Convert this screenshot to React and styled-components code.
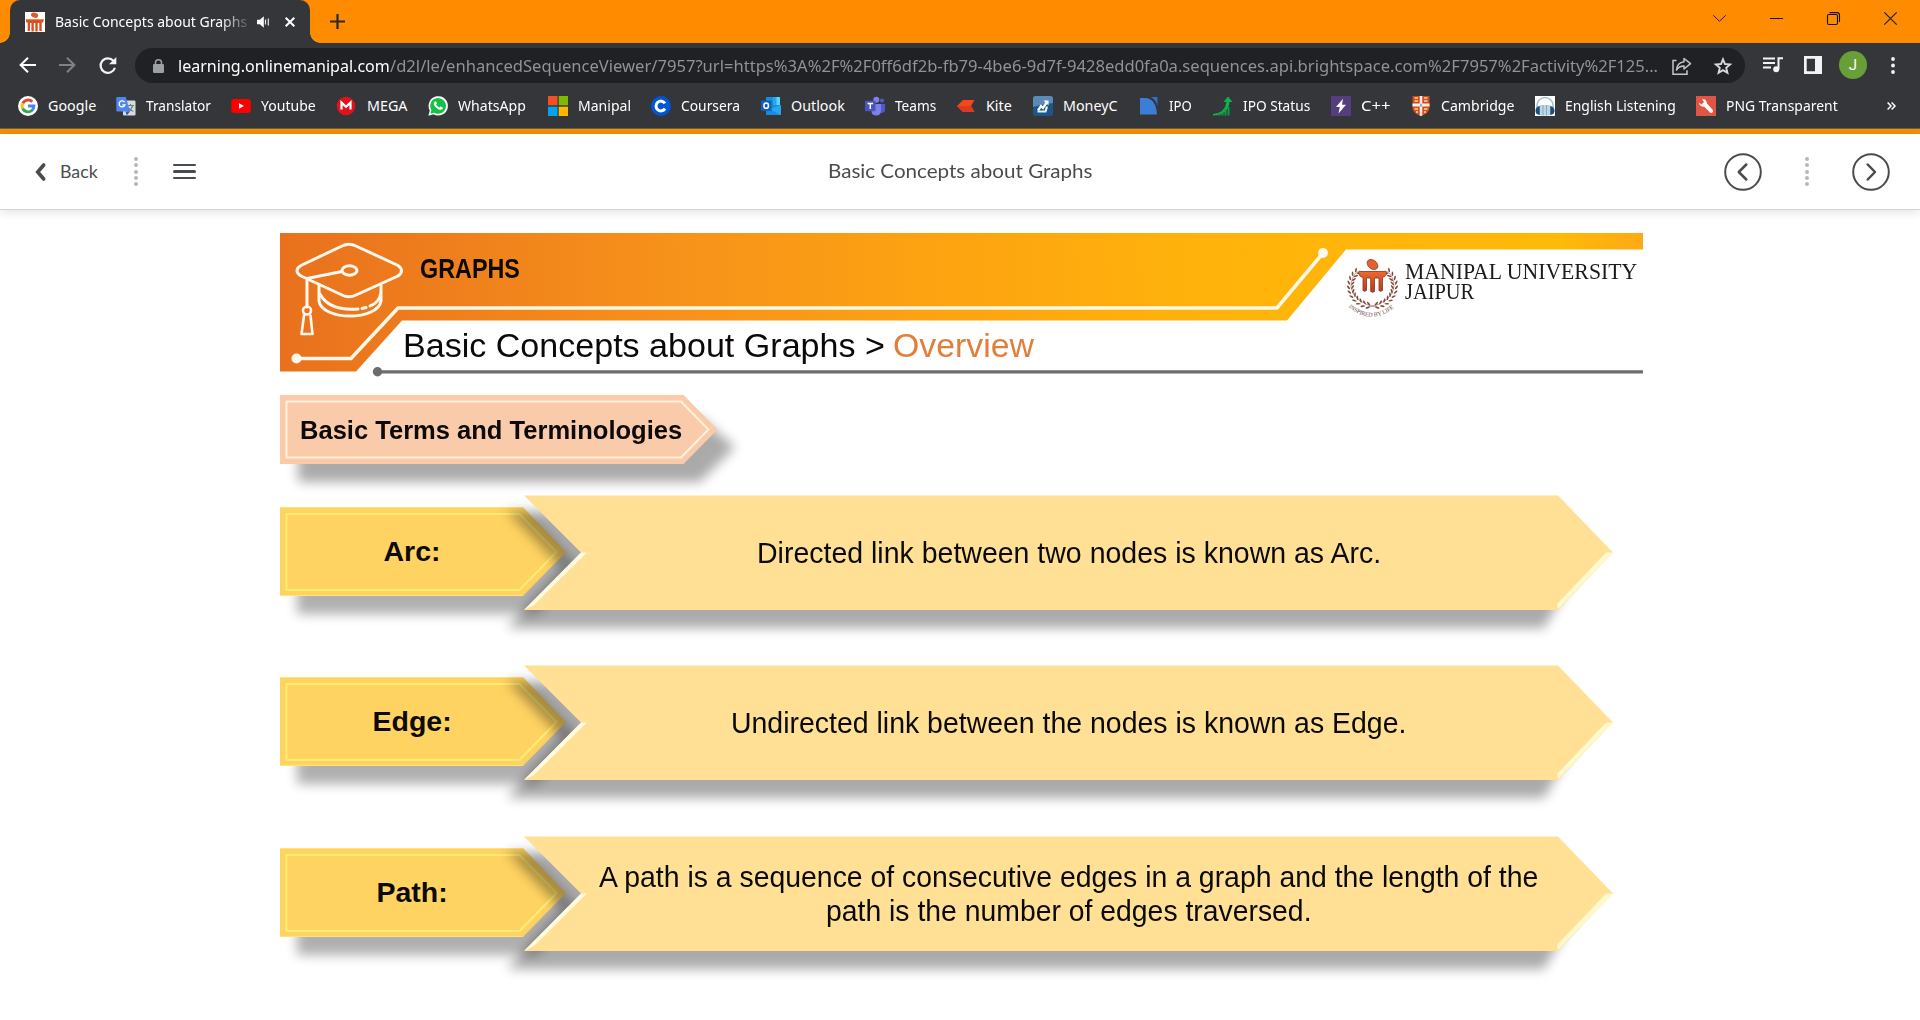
import React, { useLayoutEffect, useRef, useState } from "react";
import styled, { createGlobalStyle } from "styled-components";

const Global = createGlobalStyle`
  * { box-sizing: border-box; }
  html, body { margin: 0; padding: 0; background: #fff; overflow: hidden; }
  svg { display: block; flex: none; overflow: visible; }
`;

const ui = `"Segoe UI", "Noto Sans", "Open Sans", sans-serif`;
const arial = `"Liberation Sans", Arial, sans-serif`;

/* ---------- text fitted to a given width ---------- */

const FitBox = styled.span`
  display: block;
  flex: none;
  width: ${(p) => p.$w}px;
  white-space: nowrap;
`;
const FitInner = styled.span`
  display: inline-block;
  transform-origin: 0 50%;
  white-space: pre;
`;

function Fit({ width, children }) {
  const ref = useRef(null);
  const [scale, setScale] = useState(1);
  useLayoutEffect(() => {
    if (ref.current) setScale(width / ref.current.offsetWidth);
  }, [width]);
  return (
    <FitBox $w={width}>
      <FitInner ref={ref} style={{ transform: `scaleX(${scale})` }}>
        {children}
      </FitInner>
    </FitBox>
  );
}

/* ---------- page and browser chrome ---------- */

const Page = styled.div`
  width: 1920px;
  height: 1020px;
  overflow: hidden;
  display: flex;
  flex-direction: column;
  background: #fff;
  font-family: ${ui};
`;
const TabStrip = styled.div`
  height: 43px;
  flex: none;
  background: #ff8c00;
  display: flex;
`;
const Tab = styled.div`
  position: relative;
  margin-left: 10px;
  width: 300px;
  height: 43px;
  padding: 0 15px;
  display: flex;
  align-items: center;
  background: #35363a;
  border-radius: 10px 10px 0 0;
  &::before,
  &::after {
    content: "";
    position: absolute;
    bottom: 0;
    width: 10px;
    height: 10px;
  }
  &::before {
    left: -10px;
    background: radial-gradient(circle at 0 0, transparent 9.5px, #35363a 10px);
  }
  &::after {
    right: -10px;
    background: radial-gradient(circle at 100% 0, transparent 9.5px, #35363a 10px);
  }
`;
const TabTitle = styled.div`
  margin-left: 10px;
  width: 202px;
  font-size: 14.3px;
  line-height: 41px;
  color: #fff;
  overflow: hidden;
  mask-image: linear-gradient(90deg, #000 165px, transparent 198px);
`;
const TabClose = styled.div`
  margin-left: 15px;
`;
const NewTab = styled.div`
  width: 55px;
  display: flex;
  align-items: center;
  justify-content: center;
`;
const WindowControls = styled.div`
  margin-left: auto;
  display: flex;
  width: 229px;
  height: 37px;
`;
const WindowButton = styled.div`
  width: 57px;
  display: flex;
  align-items: center;
  justify-content: center;
`;

const Toolbar = styled.div`
  height: 45px;
  flex: none;
  background: #35363a;
  display: flex;
  padding-top: 5px;
`;
const NavButtons = styled.div`
  width: 135px;
  height: 34px;
  padding-left: 15px;
  display: flex;
  align-items: center;
  gap: 15px;
`;
const NavButton = styled.div`
  width: 25px;
  display: flex;
  justify-content: center;
`;
const Omnibox = styled.div`
  width: 1610px;
  height: 35px;
  border-radius: 18px;
  background: #202124;
  display: flex;
  align-items: center;
  padding: 0 2px 0 17px;
`;
const Url = styled.div`
  flex: 1;
  margin-left: 14px;
  display: flex;
  font-size: 16.6px;
  line-height: 33px;
  color: #8f9296;
`;
const Domain = styled.span`
  color: #fff;
`;
const OmniIcon = styled.div`
  width: ${(p) => p.$w}px;
  display: flex;
  justify-content: center;
`;
const Actions = styled.div`
  display: flex;
  margin-left: 8px;
  height: 34px;
`;
const Action = styled.div`
  width: 40px;
  display: flex;
  align-items: center;
  justify-content: center;
`;
const Avatar = styled.div`
  width: 28px;
  height: 28px;
  border-radius: 50%;
  background: #689f38;
  color: #fff;
  font: 15px/28px Roboto, sans-serif;
  text-align: center;
`;

const Bookmarks = styled.div`
  height: 41px;
  flex: none;
  padding-left: 18px;
  padding-bottom: 4px;
  background: #35363a;
  border-bottom: 1px solid #5f6063;
  display: flex;
  align-items: center;
`;
const Bookmark = styled.div`
  width: ${(p) => p.$w}px;
  display: flex;
  align-items: center;
  gap: 10px;
  font-size: 14.3px;
  line-height: 36px;
  color: #fff;
`;
const Accent = styled.div`
  height: 5px;
  flex: none;
  background: #f59100;
`;

/* ---------- viewer header ---------- */

const ViewerHeader = styled.header`
  height: 76px;
  flex: none;
  display: grid;
  grid-template-columns: 1fr auto 1fr;
  align-items: center;
  border-bottom: 1px solid #d4d4d4;
  box-shadow: 0 2px 10px rgba(0, 0, 0, 0.12);
  background: #fff;
  color: #494c4e;
  font: 19.2px/72px Lato, sans-serif;
`;
const ViewerTitle = styled.div`
  padding-bottom: 2px;
`;
const HeaderLeft = styled.div`
  display: flex;
  align-items: center;
  padding-left: 34px;
`;
const BackLabel = styled.div`
  margin-left: 13px;
  margin-right: 1px;
  padding-bottom: 2px;
  font-size: 17.8px;
`;
const HeaderRight = styled.div`
  display: flex;
  align-items: center;
  justify-content: flex-end;
  padding-right: 30px;
`;
const DotDivider = styled.div`
  display: flex;
  flex-direction: column;
  gap: 2.2px;
  margin: 0 ${(p) => p.$mx}px;
`;
const Dot = styled.i`
  width: 4px;
  height: 4px;
  border-radius: 50%;
  background: #b1b9be;
`;
const Burger = styled.div`
  width: 23px;
  display: flex;
  flex-direction: column;
  gap: 4px;
`;
const BurgerLine = styled.i`
  height: 2.4px;
  border-radius: 2px;
  background: #494c4e;
`;

/* ---------- slide ---------- */

const Slide = styled.main`
  width: 1363px;
  margin: 23px 0 0 280px;
  display: flex;
  flex-direction: column;
  font-family: ${arial};
  color: #0c0a08;
`;
const Backdrop = styled.svg`
  position: absolute;
  left: 0;
  top: 0;
`;
const Banner = styled.section`
  position: relative;
  height: 162px;
  display: flex;
  justify-content: space-between;
`;
const BannerText = styled.div`
  position: relative;
  padding: 20px 0 0 123px;
`;
const Subject = styled.div`
  padding-left: 17px;
  font-size: 28.5px;
  line-height: 30px;
  font-weight: 700;
`;
const Topic = styled.h1`
  margin: 43px 0 0;
  display: flex;
  gap: 8px;
  font-weight: 400;
  font-size: 33px;
  line-height: 40px;
`;
const Current = styled.span`
  color: #e07f3c;
`;
const Brand = styled.div`
  position: relative;
  display: flex;
  padding: 26px 6px 0 0;
  gap: 7px;
`;
const BrandName = styled.div`
  padding-top: 3px;
  font-family: "Liberation Serif", serif;
  font-size: 22.5px;
  line-height: 20px;
  color: #1c1a1a;
`;
const Ribbon = styled.h2`
  position: relative;
  margin: 0;
  height: 69px;
  padding-left: 20px;
  display: flex;
  font-size: 25px;
  line-height: 71px;
  font-weight: 700;
`;
const RibbonText = styled.span`
  position: relative;
`;
const Term = styled.section`
  position: relative;
  height: 115px;
  margin-top: ${(p) => p.$gap}px;
  display: flex;
  gap: 36px;
`;
const TermLabel = styled.div`
  position: relative;
  width: 264px;
  display: flex;
  justify-content: center;
  font-size: 28.5px;
  line-height: 113px;
  font-weight: 700;
`;
const TermBody = styled.div`
  position: relative;
  width: 977px;
  display: flex;
  flex-direction: column;
  align-items: center;
  justify-content: center;
  font-size: 29px;
  line-height: 34px;
  padding-top: ${(p) => (p.$double ? 1 : 0)}px;
`;
const Shadow = styled.polygon`
  fill: #000;
  opacity: ${(p) => p.$o};
  filter: blur(6px);
`;

/* ---------- logos ---------- */

const Pillars = ({ size = 20 }) => (
  <svg width={size} height={size} viewBox="0 0 20 20">
    <rect width="20" height="20" fill="#fff" />
    <ellipse cx="9.6" cy="3.2" rx="3.7" ry="2.5" fill="#e2572a" transform="rotate(18 9.6 3.2)" />
    <path d="M.8 7h18l-.6 3.4h-1.5V19h-2.4v-8h-1.6v8.4h-2.4V11H8.800v8.400H6.400V11H5v8H2.700v-8.600H1.300z" fill="#d94f20" />
    <path d="M1 7h18l-.2 1H1.200z" fill="#f08a4b" />
  </svg>
);

const leaves = Array.from({ length: 11 }, (_, i) => 78 - i * 12.5);

const Crest = () => (
  <svg width="50" height="58" viewBox="0 0 50 58">
    <defs>
      <path id="motto" d="M.5 48 Q24 68 49 46.500" />
      <linearGradient id="pillar" x1="0" y1="0" x2="0" y2="1">
        <stop offset="0" stopColor="#f06a2c" />
        <stop offset="1" stopColor="#b83a1c" />
      </linearGradient>
    </defs>
    {[1, -1].map((side) => (
      <g key={side} transform={`translate(24.500 27) scale(${side} 1)`}>
        <path d="M-5 21.500 Q19 17 21.500 1 Q22 -8 15 -15" fill="none" stroke="#8a5a4c" strokeWidth=".6" />
        {leaves.map((a) => {
          const r = (a * Math.PI) / 180;
          const x = Math.cos(r) * 22;
          const y = Math.sin(r) * 20;
          return (
            <g key={a} transform={`translate(${x} ${y}) rotate(${a - 90})`} fill="#80493c">
              <ellipse cx="1" cy="-1.800" rx="2.300" ry=".85" transform="rotate(-35)" />
              <ellipse cx="1" cy="1.800" rx="2.300" ry=".85" transform="rotate(35)" />
            </g>
          );
        })}
      </g>
    ))}
    <ellipse cx="24.500" cy="5.500" rx="6" ry="4.300" transform="rotate(38 24.500 5.500)" fill="#e5602b" stroke="#8c3a20" strokeWidth=".7" />
    <path
      d="M10.500 13 Q11 11.500 13 12.500 H36 Q38 11.500 38.700 13 Q38.800 17.500 34.500 18.300 V31.500 Q32.500 33 31 31.500 V19 H26.500 V32.500 Q24.500 34 22.700 32.500 V19 H18.500 V31.500 Q16.500 33 15 31.500 V18.300 Q10.500 17.500 10.500 13z"
      fill="url(#pillar)"
      stroke="#7d3420"
      strokeWidth=".8"
    />
    <text fontFamily="Liberation Serif, serif" fontSize="5.900" fill="#6b4a42">
      <textPath href="#motto">INSPIRED BY LIFE</textPath>
    </text>
  </svg>
);

const icon = (children, box = "0 0 20 20") => (
  <svg width="20" height="20" viewBox={box}>{children}</svg>
);

const bookmarks = [
  ["Google", 98, 48, icon(<>
    <circle cx="10" cy="10" r="10" fill="#fff" />
    <g fill="none" strokeWidth="2.900">
      <path d="M4.800 7.300A5.900 5.900 0 0 1 14.300 5.800" stroke="#ea4335" />
      <path d="M4.700 12.600A5.900 5.900 0 0 1 4.700 7.400" stroke="#fbbc05" />
      <path d="M14 14.300A5.900 5.900 0 0 1 4.700 12.500" stroke="#34a853" />
      <path d="M10 10h5.900A5.900 5.900 0 0 1 13.800 14.500" stroke="#4285f4" />
    </g>
  </>)],
  ["Translator", 115, 65, icon(<>
    <rect x="7" y="4.500" width="12.500" height="15" rx="1.200" fill="#d8dade" />
    <path d="M11 9.500h7M14.500 8v1.500M16.800 9.500q-1.200 4-4.800 6M12.300 11.500q1.500 2.800 5 4" stroke="#6b7a8c" strokeWidth="1.100" fill="none" />
    <path d="M1.500 1h8.300l4.200 14.500H1.500Q.3 15.500.3 14.300V2.200Q.3 1 1.500 1z" fill="#4e86ec" />
    <path d="M9.500 15.500H14l-3.300 4z" fill="#2f5bb5" />
    <path d="M8.600 6.200A3 3 0 1 0 9 8.800H6.300" fill="none" stroke="#fff" strokeWidth="1.300" />
  </>)],
  ["Youtube", 106, 55, icon(<>
    <rect x=".3" y="3" width="19.500" height="14" rx="3.300" fill="#f00" />
    <path d="M8 7.200v5.600l5-2.800z" fill="#fff" />
  </>)],
  ["MEGA", 91, 40, icon(<>
    <circle cx="9" cy="10" r="9.300" fill="#e0121c" />
    <path d="M4.500 13.600V6.600L9 10.800l4.500-4.200v7" fill="none" stroke="#fff" strokeWidth="2.200" />
  </>)],
  ["WhatsApp", 120, 68, icon(<>
    <path d="M.4 19.700l1.400-5.100A9.700 9.700 0 1 1 5.500 18.300z" fill="#fff" />
    <path d="M2.400 17.700l1-3.500A7.900 7.900 0 1 1 6.100 16.800z" fill="#12c143" />
    <path d="M6.900 5.400q.9-.5 1.300.3l.7 1.600q.2.500-.7 1.400 1.200 2.100 3.300 2.900.9-1.200 1.400-1l1.700.9q.6.400 0 1.300-1.400 1.700-4.200.4-3.200-1.500-4.400-4.300-.7-2.300.9-3.500z" fill="#fff" />
  </>)],
  ["Manipal", 103, 53, icon(<>
    <path d="M0 0h9.500v9.300H0z" fill="#f25022" />
    <path d="M10.700 0H20v9.300h-9.300z" fill="#7fba00" />
    <path d="M0 10.700h9.500V20H0z" fill="#00a4ef" />
    <path d="M10.700 10.700H20V20h-9.300z" fill="#ffb900" />
  </>)],
  ["Coursera", 110, 59, icon(<>
    <circle cx="10" cy="10" r="10" fill="#0056d2" />
    <path d="M14 7.300A4.900 4.900 0 1 0 14 12.700" fill="none" stroke="#fff" strokeWidth="3" />
  </>)],
  ["Outlook", 104, 54, icon(<>
    <rect x="5" y="1" width="14" height="15" rx="1" fill="#1490df" />
    <path d="M12 1h7v8h-7z" fill="#50d9ff" />
    <path d="M12 1h3.500v8H12z" fill="#28a8ea" />
    <path d="M5 8l8 5.500L20 9v9q0 1-1 1H6q-1 0-1-1z" fill="#1a8ade" />
    <path d="M20 9v9q0 1-1 1l-10-6z" fill="#35b8f1" opacity=".6" />
    <rect y="4.500" width="10.500" height="10.500" rx="1" fill="#0f5fbd" />
    <ellipse cx="5.200" cy="9.700" rx="2.300" ry="2.600" fill="none" stroke="#fff" strokeWidth="1.500" />
  </>)],
  ["Teams", 91, 41, icon(<>
    <circle cx="17" cy="4.600" r="2.100" fill="#5059c9" />
    <circle cx="11.300" cy="3.700" r="3" fill="#7b83eb" />
    <path d="M14 8h6v6q0 3-4 3z" fill="#5059c9" />
    <path d="M7 8h9v6.500q0 5-4.700 5T6.500 15z" fill="#7b83eb" />
    <rect y="4.800" width="10.500" height="10.500" rx="1" fill="#4b53bc" />
    <path d="M2.500 7.600h5.600M5.300 7.600v5.400" stroke="#fff" strokeWidth="1.500" />
  </>)],
  ["Kite", 77, 26, icon(<>
    <path d="M1 10L7 4h11.500l-3.500 6 3.500 6H7z" fill="#f6461a" />
    <path d="M1 10h14l3.500 6H7z" fill="#db3a24" />
  </>)],
  ["MoneyC", 106, 55, icon(<>
    <rect width="20" height="20" rx="2.500" fill="#1f5488" />
    <path d="M0 2.500Q0 0 2.500 0h15Q20 0 20 2.500V7Q10 8 0 11z" fill="#5b8ab6" />
    <path d="M5 14.500l3-4.500 2 2 4-6" stroke="#fff" strokeWidth="2.300" fill="none" />
    <path d="M10.500 4.500h5v5z" fill="#fff" />
    <path d="M4.500 15.500h8l1.500-5" stroke="#e6eef5" strokeWidth="2.200" fill="none" />
  </>)],
  ["IPO", 74, 23, icon(<>
    <path d="M1 2h6q10 1 11 16.500H1z" fill="#3a7fd5" />
    <path d="M12 1h6.500v9Q17 4 12 1z" fill="#2e6fd0" />
  </>)],
  ["IPO Status", 118, 67, icon(<>
    <path d="M0 18q12-1 13.500-12h-3L15 .5 19.500 6h-3Q15.500 19 0 19.500z" fill="#12b24a" />
    <path d="M6.500 17v2.500M9.500 15.500v4M12.500 13v6.500M15.500 11v8.500" stroke="#0f9c40" strokeWidth="2" />
  </>)],
  ["C++", 80, 29, icon(<>
    <rect width="20" height="20" fill="#563d7c" />
    <path d="M12 2.800L5 11h3.800L7.500 17.400 15 8.800h-4z" fill="#fff" />
  </>)],
  ["Cambridge", 124, 73, icon(<>
    <path d="M1.500 0h17v12q0 5-8.500 8Q1.500 17 1.500 12z" fill="#d84a1b" />
    <path d="M8.700 0h2.600v7.500h7.200v3h-7.200V19.500L10 20l-1.300-.5v-9H1.500v-3h7.200z" fill="#f6f1ee" />
    <path d="M3.500 2h3.500M3.500 5h3.500M13 2h3.500M13 5h3.500M3.500 13H7M13 13h3.500M5 16h2M13 16h2" stroke="#f3d9a0" strokeWidth="1.400" />
    <path d="M9.200 7.800h1.600v3H9.200z" fill="#99a" />
  </>)],
  ["English Listening", 161, 111, icon(<>
    <rect width="20" height="20" fill="#fff" />
    <path d="M2 12V9.500a8 8 0 0 1 16 0V12" fill="none" stroke="#a9bdc9" strokeWidth="1.500" />
    <rect x="4.500" y="9" width="11" height="10.500" rx="1" fill="#b9d7e4" />
    <path d="M8 9v10.500M11.500 9v10.500" stroke="#86a9bb" />
    <path d="M4.800 10v9Q.3 18.500.5 14.500T4.800 10zM15.200 10v9q4.500-.5 4.300-4.500T15.200 10z" fill="#1d4f7c" />
  </>)],
  ["PNG Transparent", 190.5, 112, icon(<>
    <rect width="20" height="20" fill="#e05544" />
    <path d="M3 6.500L5.500 8.500 8 6 6 3.300Q10.500 2.500 11 7.500L16.800 14q1 2-1 3-1 .3-1.800-.6L8 10.600Q3.500 11 3 6.500z" fill="#fff" />
  </>)],
];

const Dots = ({ mx }) => (
  <DotDivider $mx={mx}>
    {[0, 1, 2, 3, 4].map((i) => <Dot key={i} />)}
  </DotDivider>
);

const CircleArrow = ({ next }) => (
  <svg width="38" height="38" viewBox="0 0 38 38" fill="none" stroke="#494c4e">
    <circle cx="19" cy="19" r="17.800" strokeWidth="2" />
    <path d={next ? "M15.700 11.500L23 19l-7.300 7.500" : "M22.300 11.500L14.800 19l7.500 7.500"} strokeWidth="2.500" strokeLinecap="round" strokeLinejoin="round" />
  </svg>
);

function Chrome() {
  return (
    <>
      <TabStrip>
        <Tab>
          <Pillars />
          <TabTitle><Fit width={192}>Basic Concepts about Graphs</Fit></TabTitle>
          <svg width="13" height="12" viewBox="0 0 13 12">
            <path d="M0 3.800h2.800L6.800.300v11.400L2.800 8.200H0z" fill="#fff" />
            <path d="M8.500 3.500v5M11.300 2.500v7" stroke="#e4e4e4" strokeWidth="1.200" fill="none" />
          </svg>
          <TabClose>
            <svg width="10" height="10" viewBox="0 0 10 10">
              <path d="M.7.700l8.600 8.600M9.300.700L.7 9.300" stroke="#fff" strokeWidth="2" />
            </svg>
          </TabClose>
        </Tab>
        <NewTab>
          <svg width="15" height="15" viewBox="0 0 15 15"><path d="M7.500 0v15M0 7.500h15" stroke="#2a2a2a" strokeWidth="2.200" /></svg>
        </NewTab>
        <WindowControls>
          <WindowButton><svg width="13" height="7" viewBox="0 0 13 7"><path d="M.3.300l6.200 6L12.700.300" fill="none" stroke="#222" /></svg></WindowButton>
          <WindowButton><svg width="13" height="1"><path d="M0 .500h13" stroke="#111" /></svg></WindowButton>
          <WindowButton>
            <svg width="13" height="13" viewBox="0 0 13 13" fill="none" stroke="#111" strokeWidth="1.100">
              <rect x=".5" y="2.500" width="10" height="10" rx="1.500" />
              <path d="M2.500.600h7.500q2.500 0 2.500 2.500V10" />
            </svg>
          </WindowButton>
          <WindowButton><svg width="13" height="13" viewBox="0 0 13 13"><path d="M.3.300l12.400 12.400M12.700.300L.3 12.700" stroke="#222" strokeWidth="1.200" /></svg></WindowButton>
        </WindowControls>
      </TabStrip>
      <Toolbar>
        <NavButtons>
          <NavButton><svg width="17" height="16" viewBox="0 0 17 16" fill="none" stroke="#fff" strokeWidth="2"><path d="M17 8H1.800M9 .700L1.600 8 9 15.300" /></svg></NavButton>
          <NavButton><svg width="17" height="16" viewBox="0 0 17 16" fill="none" stroke="#808184" strokeWidth="2"><path d="M0 8h15.200M8 .700L15.400 8 8 15.300" /></svg></NavButton>
          <NavButton>
            <svg width="18" height="17" viewBox="0 0 18 17" fill="none" stroke="#f1f3f4" strokeWidth="2.200">
              <path d="M14.500 3.900A7.300 7.300 0 1 0 15.900 10.700" />
              <path d="M17.300 0v7.300H10z" fill="#f1f3f4" stroke="none" />
            </svg>
          </NavButton>
        </NavButtons>
        <Omnibox>
          <OmniIcon $w={12}>
            <svg width="11" height="14" viewBox="0 0 11 14">
              <rect y="5" width="11" height="9" rx="1.200" fill="#9aa0a6" />
              <path d="M2.500 5.500V3.700a3 3 0 0 1 6 0v1.800" fill="none" stroke="#9aa0a6" strokeWidth="1.500" />
            </svg>
          </OmniIcon>
          <Url>
            <Domain><Fit width={212}>learning.onlinemanipal.com</Fit></Domain>
            <Fit width={1268}>/d2l/le/enhancedSequenceViewer/7957?url=https%3A%2F%2F0ff6df2b-fb79-4be6-9d7f-9428edd0fa0a.sequences.api.brightspace.com%2F7957%2Factivity%2F125...</Fit>
          </Url>
          <OmniIcon $w={42}>
            <svg width="20" height="18" viewBox="0 0 20 18" fill="none" stroke="#c3c5c8" strokeWidth="1.500">
              <path d="M4.500 3.500H1v13.700h14v-4" />
              <path d="M12 1.500l6.500 5.200L12 12V9q-5 0-7.500 4Q5 5.500 12 4.700z" strokeLinejoin="round" />
            </svg>
          </OmniIcon>
          <OmniIcon $w={40}>
            <svg width="18" height="18" viewBox="0 0 18 18" fill="none" stroke="#d6d8da" strokeWidth="1.900">
              <path d="M9 2.300l2 4.700 5.100.4-3.900 3.400 1.200 5L9 13.100l-4.400 2.700 1.200-5-3.900-3.400L7 7z" />
            </svg>
          </OmniIcon>
        </Omnibox>
        <Actions>
          <Action>
            <svg width="20" height="16" viewBox="0 0 20 16" fill="none" stroke="#f1f3f4" strokeWidth="2">
              <path d="M0 1.500h12M0 6h12M0 10.500h8M15.500 12V1.200h4.500" />
              <circle cx="13.200" cy="12.300" r="3" fill="#f1f3f4" stroke="none" />
            </svg>
          </Action>
          <Action>
            <svg width="18" height="18" viewBox="0 0 18 18"><path d="M0 0h18v18H0zM2.700 2.700v12.600h8.300V2.700z" fill="#f1f3f4" fillRule="evenodd" /></svg>
          </Action>
          <Action><Avatar>J</Avatar></Action>
          <Action>
            <svg width="4" height="17" viewBox="0 0 4 17" fill="#f1f3f4"><circle cx="2" cy="2" r="1.900" /><circle cx="2" cy="8.500" r="1.900" /><circle cx="2" cy="15" r="1.900" /></svg>
          </Action>
        </Actions>
      </Toolbar>
      <Bookmarks>
        {bookmarks.map(([name, width, textWidth, glyph]) => (
          <Bookmark key={name} $w={width}>
            {glyph}
            <Fit width={textWidth}>{name}</Fit>
          </Bookmark>
        ))}
        <svg width="9" height="8" viewBox="0 0 9 8" fill="none" stroke="#fff" strokeWidth="1.500"><path d="M.6.500L4 4 .6 7.500M4.600.500L8 4 4.600 7.500" /></svg>
      </Bookmarks>
      <Accent />
    </>
  );
}

function Viewer() {
  return (
    <ViewerHeader>
      <HeaderLeft>
        <svg width="13" height="20" viewBox="0 0 13 20"><path d="M9.700 3L3.700 10l6 7" fill="none" stroke="#494c4e" strokeWidth="3.600" strokeLinecap="round" /></svg>
        <BackLabel><Fit width={38}>Back</Fit></BackLabel>
        <Dots mx={35} />
        <Burger><BurgerLine /><BurgerLine /><BurgerLine /></Burger>
      </HeaderLeft>
      <ViewerTitle><Fit width={264}>Basic Concepts about Graphs</Fit></ViewerTitle>
      <HeaderRight>
        <CircleArrow />
        <Dots mx={43} />
        <CircleArrow next />
      </HeaderRight>
    </ViewerHeader>
  );
}

const terms = [
  { label: "Arc:", labelWidth: 57, gap: 31, lines: [["Directed link between two nodes is known as Arc.", 624]] },
  { label: "Edge:", labelWidth: 79, gap: 55, lines: [["Undirected link between the nodes is known as Edge.", 675]] },
  {
    label: "Path:", labelWidth: 71, gap: 56, lines: [
      ["A path is a sequence of consecutive edges in a graph and the length of the", 939],
      ["path is the number of edges traversed.", 486],
    ],
  },
];

function TermRow({ label, labelWidth, gap, lines }) {
  return (
    <Term $gap={gap}>
      <Backdrop width="1363" height="115" viewBox="0 0 1363 115">
        <Shadow $o={0.31} points="17,28 256,28 300,73 256,119 17,119" />
        <path d="M0 12H243L286 57 243 101H0z" fill="#ffd361" />
        <path d="M0 12.500H243M0 100.500H243" stroke="#ffe47a" />
        <path d="M6.500 19H239.500L276.500 57 239.500 95H6.500z" fill="none" stroke="#ffec74" strokeWidth="2" />
        <Shadow $o={0.33} points="227,16 1262,16 1306,60 1264,133 227,133 282,73" />
        <path d="M244 .5H1278L1333 57.500 1278 115H244L301 57.500z" fill="#ffe094" />
        <path d="M301 57.500H307L254 110 244 115z" fill="#fffbe0" />
        <path d="M1326 57.500H1333L1278 114 1277 109z" fill="#fff9cf" />
      </Backdrop>
      <TermLabel><Fit width={labelWidth}>{label}</Fit></TermLabel>
      <TermBody $double={lines.length > 1}>
        {lines.map(([text, width]) => <Fit key={text} width={width}>{text}</Fit>)}
      </TermBody>
    </Term>
  );
}

function Cap() {
  return (
    <g fill="none" stroke="#fff8ee" strokeWidth="3" strokeLinejoin="round" strokeLinecap="round">
      <path d="M62 13Q69 9.500 76 13L118 32.500Q125 37.500 118 43L76 62Q69 65.500 62 62L21 43Q13 37.500 21 32.500z" />
      <ellipse cx="69.500" cy="37.500" rx="7.500" ry="4.700" />
      <path d="M62 38.500L27 45.500M27 46V74" />
      <path d="M39 52V68C42 88 98 88 101 68V52" />
      <path d="M40 61C48 76 65 77 78 76M82 75.500L86 74.500M90 73C96 71 100 66 100.500 61" />
      <circle cx="27" cy="77.500" r="4" strokeWidth="2.600" />
      <path d="M24 82.500L21.500 101H32.500L30.500 82.500" strokeWidth="2.600" />
    </g>
  );
}

export default function App() {
  return (
    <Page>
      <Global />
      <Chrome />
      <Viewer />
      <Slide>
        <Banner>
          <Backdrop width="1363" height="140" viewBox="0 0 1363 140">
            <defs>
              <linearGradient id="banner" gradientUnits="userSpaceOnUse" x1="0" y1="20" x2="1363" y2="0">
                <stop offset="0" stopColor="#e9711e" />
                <stop offset=".3" stopColor="#f7931a" />
                <stop offset=".48" stopColor="#fda311" />
                <stop offset=".68" stopColor="#ffb30b" />
                <stop offset=".94" stopColor="#ffb908" />
                <stop offset="1" stopColor="#ffa914" />
              </linearGradient>
            </defs>
            <path d="M0 0H1363V16.500H1066L1007 87.500H122L76 138.500H0z" fill="url(#banner)" />
            <path d="M17 125.500H71L118 75H997L1043 20" fill="none" stroke="#fff8e6" strokeWidth="3.600" />
            <circle cx="16.500" cy="125.500" r="5" fill="#fff8ee" />
            <circle cx="1043" cy="20" r="5" fill="#fff8ee" />
            <Cap />
            <path d="M97 138.800H1363" stroke="#6b6d6b" strokeWidth="3.300" />
            <circle cx="97.500" cy="138.800" r="4.700" fill="#6f6b6c" />
          </Backdrop>
          <BannerText>
            <Subject><Fit width={100}>GRAPHS</Fit></Subject>
            <Topic>
              <Fit width={482}>{"Basic Concepts about Graphs >"}</Fit>
              <Current><Fit width={141.5}>Overview</Fit></Current>
            </Topic>
          </BannerText>
          <Brand>
            <Crest />
            <BrandName>
              <Fit width={232}>MANIPAL UNIVERSITY</Fit>
              <Fit width={69}>JAIPUR</Fit>
            </BrandName>
          </Brand>
        </Banner>
        <Ribbon>
          <Backdrop width="460" height="69" viewBox="0 0 460 69">
            <Shadow $o={0.33} points="18,22 420,22 455,52 420,87 18,87" />
            <path d="M0 0H403.500L437.500 34.500 403.500 69H0z" fill="#f9cbaa" />
            <path d="M6.500 6.500H401L428.500 34.500 401 62.500H6.500z" fill="none" stroke="#fff0dd" strokeWidth="2" />
          </Backdrop>
          <RibbonText><Fit width={382}>Basic Terms and Terminologies</Fit></RibbonText>
        </Ribbon>
        {terms.map((t) => <TermRow key={t.label} {...t} />)}
      </Slide>
    </Page>
  );
}
